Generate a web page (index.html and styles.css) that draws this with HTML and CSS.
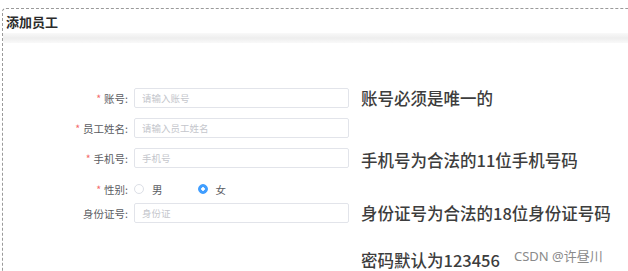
FILE: index.html
```html
<!DOCTYPE html>
<html lang="zh-CN">
<head>
    <meta charset="UTF-8">
    <meta name="viewport" content="width=device-width, initial-scale=1.0">
    <title>添加员工</title>
    <link rel="stylesheet" href="styles.css">
</head>
<body>
    <div class="panel">
        <h1 class="panel-title">添加员工</h1>
        <div class="panel-band"></div>

        <!-- form rows, each with an optional note on the right -->
        <form class="form">
            <div class="row">
                <label class="label"><span class="req">*</span>账号:</label>
                <input class="field" type="text" placeholder="请输入账号">
                <span class="note">账号必须是唯一的</span>
            </div>
            <div class="row">
                <label class="label"><span class="req">*</span>员工姓名:</label>
                <input class="field" type="text" placeholder="请输入员工姓名">
            </div>
            <div class="row">
                <label class="label"><span class="req">*</span>手机号:</label>
                <input class="field" type="text" placeholder="手机号">
                <span class="note note-low">手机号为合法的11位手机号码</span>
            </div>
            <div class="row row-gender">
                <label class="label"><span class="req">*</span>性别:</label>
                <div class="radios">
                    <label class="radio"><input type="radio" name="sex"> 男</label>
                    <label class="radio"><input type="radio" name="sex" checked> 女</label>
                </div>
            </div>
            <div class="row row-id">
                <label class="label">身份证号:</label>
                <input class="field" type="text" placeholder="身份证">
                <span class="note">身份证号为合法的18位身份证号码</span>
            </div>
            <div class="row row-pwd">
                <span class="label"></span>
                <span class="field-space"></span>
                <span class="note">密码默认为123456</span>
            </div>
        </form>
    </div>

    <div class="watermark">CSDN @许昼川</div>
</body>
</html>
```

FILE: styles.css
```css
body {
    margin: 0;
    padding: 0;
    background: #fff;
    font-family: "Noto Sans CJK SC", "Noto Sans", sans-serif;
    overflow: hidden;
}
.panel {
    margin: 8px 0 0 2px;
    height: 263px;
    border-top: 1px dashed #9a9a9a;
    border-left: 1px dashed #9a9a9a;
    border-top-left-radius: 4px;
    overflow: hidden;
}
.panel-title {
    margin: 0;
    padding: 3px 0 0 3px;
    height: 21px;
    font-size: 13px;
    line-height: 20px;
    font-weight: bold;
    color: #2b2b2b;
}
.panel-band {
    height: 10px;
    background: linear-gradient(#f9f9f9, #eeeeee 50%, #f9f9f9);
}
.form {
    padding-top: 35px;
}
.row {
    display: flex;
    align-items: center;
    height: 20px;
    margin-top: 10px;
}
.row-gender {
    margin-top: 11px;
}
.row-id {
    margin-top: 4px;
}
.row-pwd {
    margin-top: 27px;
}
.label {
    width: 131px;
    padding-right: 6px;
    box-sizing: border-box;
    text-align: right;
    font-size: 10.5px;
    color: #5a5c62;
    flex-shrink: 0;
}
.req {
    color: #f56c6c;
    margin-right: 3px;
}
.field {
    width: 215px;
    height: 20px;
    box-sizing: border-box;
    border: 1px solid #e2e4ea;
    border-radius: 2px;
    padding: 0 7px;
    font-family: inherit;
    font-size: 9.5px;
    color: #606266;
    outline: none;
}
.field::placeholder {
    color: #c4c6cc;
}
.field-space {
    width: 215px;
    flex-shrink: 0;
}
.note {
    margin-left: 12px;
    font-size: 16.5px;
    line-height: 20px;
    font-weight: 500;
    color: #3d3d3d;
    white-space: nowrap;
}
.note-low {
    position: relative;
    top: 2px;
}
.radios {
    display: flex;
    gap: 35px;
}
.radio {
    display: flex;
    align-items: center;
    gap: 4px;
    font-size: 10.5px;
    color: #5a5c62;
}
.radio input {
    appearance: none;
    margin: 0 4px 0 0;
    width: 10px;
    height: 10px;
    border: 1px solid #dcdfe6;
    border-radius: 50%;
    box-sizing: border-box;
}
.radio input:checked {
    border-color: #409eff;
    background: radial-gradient(circle, #fff 0 1.5px, #409eff 2px);
}
.watermark {
    position: absolute;
    left: 514px;
    top: 246px;
    font-family: "Noto Sans", "Noto Sans CJK SC", sans-serif;
    font-size: 13px;
    color: #8a8a8a;
}
```
